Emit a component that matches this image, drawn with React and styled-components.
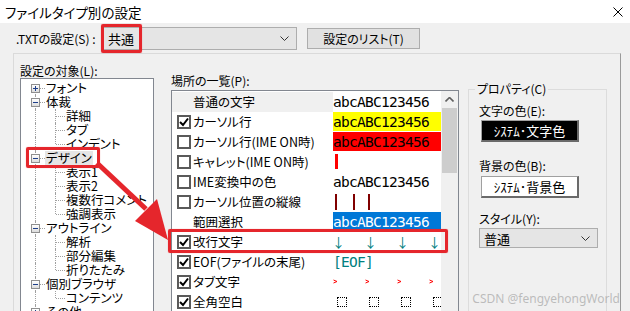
import React from 'react'
import styled, { createGlobalStyle } from 'styled-components'

const GlobalStyle = createGlobalStyle`
  html, body { margin: 0; padding: 0; }
  body {
    width: 630px;
    height: 311px;
    overflow: hidden;
    background: #f0f0f0;
    font-family: "Noto Sans CJK JP", "Noto Sans", sans-serif;
    font-size: 12px;
    color: #000;
    font-feature-settings: "palt";
  }
`

const Window = styled.div`
  position: relative;
  width: 630px;
  height: 311px;
  overflow: hidden;
  display: flex;
  flex-direction: column;
`

const TitleBar = styled.div`
  height: 23px;
  flex: none;
  background: #fff;
  display: flex;
  align-items: center;
  justify-content: space-between;
  padding: 0 7px 0 5px;
  font-size: 13.5px;
`

const TopRow = styled.div`
  height: 30px;
  flex: none;
  display: flex;
  align-items: center;
  padding-left: 16px;
`

const TopLabel = styled.span`
  width: 87px;
`

const Combo = styled.div`
  width: ${p => p.$w}px;
  height: ${p => p.$h}px;
  margin-top: ${p => p.$mt || 0}px;
  box-sizing: border-box;
  background: #e5e5e5;
  border: 1px solid #adadad;
  display: flex;
  align-items: center;
  justify-content: space-between;
  padding: 0 7px 0 4px;
  font-size: 13px;
`

const Button = styled.div`
  margin-left: 10px;
  width: 113px;
  height: 21px;
  box-sizing: border-box;
  background: #e1e1e1;
  border: 1px solid #adadad;
  display: flex;
  align-items: center;
  justify-content: center;
`

const Panel = styled.div`
  flex: 1;
  margin-left: 13px;
  width: 608px;
  box-sizing: border-box;
  border-top: 1px solid #dadada;
  border-left: 1px solid #dadada;
  border-right: 1px solid #9a9a9a;
  display: flex;
  padding-left: 6px;
`

const Column = styled.div`
  flex: none;
  width: ${p => p.$w}px;
  margin-right: ${p => p.$gap || 0}px;
  padding-top: ${p => p.$top}px;
`

const GroupLabel = styled.div`
  height: ${p => p.$h || 14}px;
  line-height: ${p => p.$h || 14}px;
`

const Tree = styled.div`
  height: 240px;
  box-sizing: border-box;
  background: #fff;
  border: 1px solid #828790;
  padding: 2px 0 0 4px;
  overflow: hidden;
`

const TreeRow = styled.div`
  display: flex;
  height: 14px;
  line-height: 14px;
  white-space: nowrap;
`

const Indent = styled.div`
  position: relative;
  flex: none;
  width: 20px;
  height: 14px;
  &::before {
    content: '';
    display: ${p => (p.$v ? 'block' : 'none')};
    position: absolute;
    left: 10px;
    top: ${p => (p.$v === 'bottom' ? '7px' : '0')};
    bottom: ${p => (p.$v === 'top' ? '7px' : '0')};
    border-left: 1px dotted #a0a0a0;
  }
  &::after {
    content: '';
    display: ${p => (p.$h ? 'block' : 'none')};
    position: absolute;
    left: 11px;
    right: 0;
    top: 7px;
    border-top: 1px dotted #a0a0a0;
  }
`

const Expander = styled.div`
  position: absolute;
  left: 6px;
  top: 3px;
  width: 9px;
  height: 9px;
  box-sizing: border-box;
  border: 1px solid #8f8f8f;
  background: linear-gradient(#ffffff, #dcdcdc);
  z-index: 1;
  &::before {
    content: '';
    position: absolute;
    left: 1px;
    top: 3px;
    width: 5px;
    height: 1px;
    background: #1e3f8a;
  }
  &::after {
    content: '';
    display: ${p => (p.$open ? 'none' : 'block')};
    position: absolute;
    left: 3px;
    top: 1px;
    width: 1px;
    height: 5px;
    background: #1e3f8a;
  }
`

const TreeText = styled.span`
  padding: 0 1px;
  font-size: 12.5px;
  background: ${p => (p.$sel ? '#e5e5e5' : 'transparent')};
`

const ListBox = styled.div`
  margin-top: 1px;
  height: 240px;
  box-sizing: border-box;
  display: flex;
  background: #fff;
  border: 1px solid #828790;
`

const Rows = styled.div`
  width: 269px;
  padding-top: 1px;
`

const Row = styled.div`
  display: flex;
  height: 20px;
  white-space: nowrap;
`

const CheckCell = styled.div`
  width: 21px;
  box-sizing: border-box;
  padding-left: 5px;
  display: flex;
  align-items: center;
  background: ${p => (p.$sel ? '#f0f0f0' : 'transparent')};
`

const CheckBox = styled.div`
  width: 14px;
  height: 14px;
  box-sizing: border-box;
  border: 2px solid #5a5a5a;
  background: #fff;
  display: flex;
  align-items: center;
  justify-content: center;
`

const LabelCell = styled.div`
  width: 140px;
  line-height: 20px;
  font-size: 12.5px;
  background: ${p => (p.$sel ? '#f0f0f0' : 'transparent')};
`

const Sample = styled.div`
  position: relative;
  width: 108px;
  height: 19px;
  overflow: hidden;
  display: flex;
  align-items: center;
  background: ${p => p.$bg || 'transparent'};
  color: ${p => p.$fg || '#000'};
  font-family: "DejaVu Sans Mono", "Liberation Mono", monospace;
  font-size: 14.5px;
  letter-spacing: -0.73px;
  font-feature-settings: normal;
`

const Caret = styled.div`
  margin-left: 2px;
  width: 3px;
  height: 15px;
  background: #ff0000;
`

const VLine = styled.div`
  width: 2px;
  height: 16px;
  margin-left: ${p => p.$ml}px;
  background: #800000;
`

const Slot = styled.div`
  flex: none;
  width: 32px;
  display: flex;
  align-items: center;
  padding-left: ${p => p.$pl || 0}px;
  box-sizing: border-box;
`

const LineFeed = styled.span`
  margin-left: -1px;
  font-family: "Noto Sans CJK JP", sans-serif;
  font-size: 13px;
  letter-spacing: 0;
  color: #008080;
`

const DotBox = styled.div`
  width: 10px;
  height: 10px;
  box-sizing: border-box;
  border: 1px dotted #000;
`

const ScrollBar = styled.div`
  width: 17px;
  background: #f0f0f0;
  display: flex;
  flex-direction: column;
  align-items: center;
`

const ScrollBtn = styled.div`
  width: 17px;
  height: 17px;
  display: flex;
  align-items: center;
  justify-content: center;
`

const Thumb = styled.div`
  width: 15px;
  height: 65px;
  background: #cdcdcd;
`

const Group = styled.fieldset`
  margin: 28px 0 0;
  width: 139px;
  height: 260px;
  box-sizing: border-box;
  border: 1px solid #dcdcdc;
  padding: 8px 8px 0 10px;
  min-width: 0;
`

const Legend = styled.legend`
  margin-left: -4px;
  padding: 0 2px;
  line-height: 14px;
`

const PropLabel = styled.div`
  margin-top: ${p => p.$mt}px;
  line-height: 14px;
`

const ColorButton = styled.div`
  margin: ${p => p.$mt}px 0 0 2px;
  width: 98px;
  height: 22px;
  box-sizing: border-box;
  background: ${p => p.$bg};
  color: ${p => p.$fg};
  border: 1px solid #a0a0a0;
  border-right: 2px solid #6a6a6a;
  border-bottom: 2px solid #6a6a6a;
  display: flex;
  align-items: center;
  justify-content: center;
  font-size: 13px;
  font-feature-settings: normal;
`

const Mark = styled.div`
  position: absolute;
  left: ${p => p.$x}px;
  top: ${p => p.$y}px;
  width: ${p => p.$w}px;
  height: ${p => p.$h}px;
  box-sizing: border-box;
  border: 3px solid #e5262c;
  border-radius: 2px;
  box-shadow: 0 0 1px rgba(229, 38, 44, 0.6);
  pointer-events: none;
`

const Overlay = styled.svg`
  position: absolute;
  left: 0;
  top: 0;
  pointer-events: none;
`

const Watermark = styled.div`
  position: absolute;
  right: 10px;
  bottom: 4px;
  color: rgba(170, 170, 170, 0.75);
  font-family: "Noto Sans", sans-serif;
  font-size: 12px;
  font-feature-settings: normal;
`

const Chevron = ({ dir = 'down', color = '#333' }) => (
  <svg width="9" height="5" viewBox="0 0 9 5">
    <polyline
      points={dir === 'down' ? '0.5,0.5 4.5,4.5 8.5,0.5' : '0.5,4.5 4.5,0.5 8.5,4.5'}
      fill="none"
      stroke={color}
      strokeWidth={dir === 'down' ? 1 : 1.6}
    />
  </svg>
)

const Check = () => (
  <svg width="10" height="10" viewBox="0 0 10 10">
    <polyline points="1,5 4,8 9,1.5" fill="none" stroke="#000" strokeWidth="2" />
  </svg>
)

const TabMark = () => (
  <svg width="5" height="5" viewBox="0 0 5 5">
    <polyline points="0.5,1 4,2.5 0.5,4" fill="none" stroke="#ff0000" strokeWidth="1" />
  </svg>
)

const tree = [
  { level: 0, text: 'フォント', box: 'closed', first: true },
  { level: 0, text: '体裁', box: 'open' },
  { level: 1, text: '詳細' },
  { level: 1, text: 'タブ' },
  { level: 1, text: 'インデント', last: true },
  { level: 0, text: 'デザイン', box: 'open', sel: true },
  { level: 1, text: '表示1' },
  { level: 1, text: '表示2' },
  { level: 1, text: '複数行コメント' },
  { level: 1, text: '強調表示', last: true },
  { level: 0, text: 'アウトライン', box: 'open' },
  { level: 1, text: '解析' },
  { level: 1, text: '部分編集' },
  { level: 1, text: '折りたたみ', last: true },
  { level: 0, text: '個別ブラウザ', box: 'open' },
  { level: 1, text: 'コンテンツ', last: true },
  { level: 0, text: 'その他', box: 'closed' },
]

const SAMPLE = 'abcABC123456'

const four = [0, 1, 2, 3]

const rows = [
  { label: '普通の文字', check: null, sel: true, sample: <span>{SAMPLE}</span> },
  { label: 'カーソル行', check: true, bg: '#ffff00', sample: <span>{SAMPLE}</span> },
  { label: 'カーソル行(IME ON時)', check: false, bg: '#ff0000', sample: <span>{SAMPLE}</span> },
  { label: 'キャレット(IME ON時)', check: false, sample: <Caret /> },
  { label: 'IME変換中の色', check: false, sample: <span>{SAMPLE}</span> },
  {
    label: 'カーソル位置の縦線',
    check: false,
    sample: (
      <>
        <VLine $ml={2} />
        <VLine $ml={16} />
        <VLine $ml={13} />
      </>
    ),
  },
  { label: '範囲選択', check: null, bg: '#0078d7', fg: '#fff', sample: <span>{SAMPLE}</span> },
  {
    label: '改行文字',
    check: true,
    sample: four.map(i => (
      <Slot key={i}>
        <LineFeed>↓</LineFeed>
      </Slot>
    )),
  },
  { label: 'EOF(ファイルの末尾)', check: true, fg: '#008080', sample: <span>[EOF]</span> },
  {
    label: 'タブ文字',
    check: true,
    sample: four.map(i => (
      <Slot key={i}>
        <TabMark />
      </Slot>
    )),
  },
  {
    label: '全角空白',
    check: true,
    sample: four.map(i => (
      <Slot key={i} $pl={4}>
        <DotBox />
      </Slot>
    )),
  },
]

const TreeItem = ({ item }) => {
  if (item.level === 0) {
    return (
      <TreeRow>
        <Indent $v={item.first ? 'bottom' : 'full'} $h>
          <Expander $open={item.box === 'open'} />
        </Indent>
        <TreeText $sel={item.sel}>{item.text}</TreeText>
      </TreeRow>
    )
  }
  return (
    <TreeRow>
      <Indent $v="full" />
      <Indent $v={item.last ? 'top' : 'full'} $h />
      <TreeText>{item.text}</TreeText>
    </TreeRow>
  )
}

const App = () => {
  return (
    <Window>
      <GlobalStyle />
      <TitleBar>
        <span>ファイルタイプ別の設定</span>
        <svg width="10" height="10" viewBox="0 0 10 10">
          <path d="M0.5 0.5 L9.5 9.5 M9.5 0.5 L0.5 9.5" stroke="#000" strokeWidth="1" />
        </svg>
      </TitleBar>

      <TopRow>
        <TopLabel>.TXTの設定(S) :</TopLabel>
        <Combo $w={194} $h={23}>
          <span>共通</span>
          <Chevron />
        </Combo>
        <Button>設定のリスト(T)</Button>
      </TopRow>

      <Panel>
        <Column $w={134} $gap={17} $top={10}>
          <GroupLabel>設定の対象(L):</GroupLabel>
          <Tree>
            {tree.map((item, i) => (
              <TreeItem key={i} item={item} />
            ))}
          </Tree>
        </Column>

        <Column $w={288} $gap={9} $top={19}>
          <GroupLabel $h={16}>場所の一覧(P):</GroupLabel>
          <ListBox>
            <Rows>
              {rows.map((r, i) => (
                <Row key={i}>
                  <CheckCell $sel={r.sel}>
                    {r.check !== null && <CheckBox>{r.check && <Check />}</CheckBox>}
                  </CheckCell>
                  <LabelCell $sel={r.sel}>{r.label}</LabelCell>
                  <Sample $bg={r.bg} $fg={r.fg}>
                    {r.sample}
                  </Sample>
                </Row>
              ))}
            </Rows>
            <ScrollBar>
              <ScrollBtn>
                <Chevron dir="up" color="#606060" />
              </ScrollBtn>
              <Thumb />
            </ScrollBar>
          </ListBox>
        </Column>

        <Group>
          <Legend>プロパティ(C)</Legend>
          <PropLabel $mt={0}>文字の色(E):</PropLabel>
          <ColorButton $mt={2} $bg="#000" $fg="#fff">
            ｼｽﾃﾑ･文字色
          </ColorButton>
          <PropLabel $mt={17}>背景の色(B):</PropLabel>
          <ColorButton $mt={3} $bg="#fff" $fg="#000">
            ｼｽﾃﾑ･背景色
          </ColorButton>
          <PropLabel $mt={14}>スタイル(Y):</PropLabel>
          <Combo $w={119} $h={20} $mt={2}>
            <span>普通</span>
            <Chevron />
          </Combo>
        </Group>
      </Panel>

      <Mark $x={101} $y={24} $w={41} $h={29} />
      <Mark $x={26} $y={147} $w={74} $h={21} />
      <Mark $x={168} $y={229} $w={280} $h={24} />
      <Overlay width="630" height="311" viewBox="0 0 630 311">
        <line x1="97" y1="163" x2="146" y2="209" stroke="#e5262c" strokeWidth="5" />
        <polygon points="135,221 157,199 168,240" fill="#e5262c" />
      </Overlay>

      <Watermark>CSDN @fengyehongWorld</Watermark>
    </Window>
  )
}

export default App
